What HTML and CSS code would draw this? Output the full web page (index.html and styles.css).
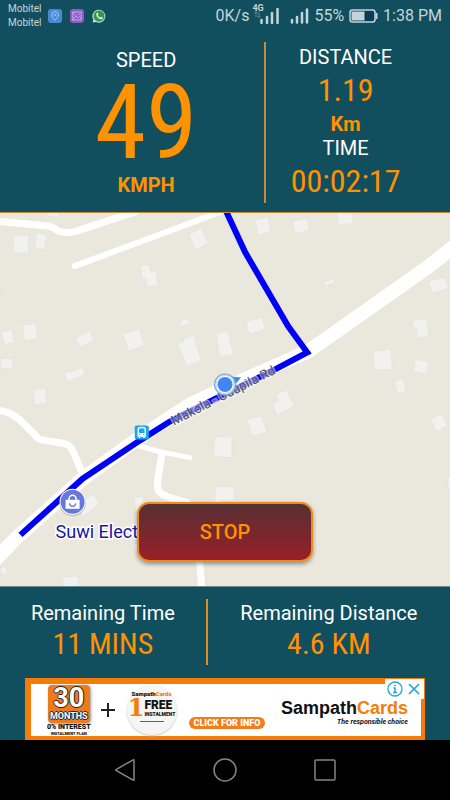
FILE: index.html
```html
<!DOCTYPE html>
<html lang="en">
<head>
  <meta charset="UTF-8" />
  <meta name="viewport" content="width=device-width, initial-scale=1" />
  <title>Trip Meter</title>
  <link rel="stylesheet" href="styles.css">
</head>
<body>

  <header class="status-bar">
    <div class="carriers">
      <span>Mobitel</span>
      <span>Mobitel</span>
    </div>
    <div class="status-apps">
      <svg width="14" height="14" viewBox="0 0 14 14" aria-hidden="true">
        <rect width="14" height="14" rx="3" fill="#4a8ad4"/>
        <path d="M7 11.5C5 9 3.7 7.500 3.700 5.800a3.300 3.300 0 0 1 6.600 0C10.300 7.500 9 9 7 11.500Z" fill="none" stroke="#a9cdf2" stroke-width=".9"/>
        <circle cx="7" cy="5.800" r="1" fill="none" stroke="#a9cdf2" stroke-width=".7"/>
      </svg>
      <svg width="14" height="14" viewBox="0 0 14 14" aria-hidden="true">
        <rect width="14" height="14" rx="3" fill="#8a5cc4"/>
        <rect x="2.800" y="3" width="8.400" height="8" fill="none" stroke="#cdb5ea" stroke-width=".9"/>
        <path d="M3 10.500 6 7l2 2 1.500-1.500 1.700 2M3.500 4l3 3" fill="none" stroke="#cdb5ea" stroke-width=".8"/>
        <circle cx="8.800" cy="5.300" r=".8" fill="#cdb5ea"/>
      </svg>
      <svg width="14" height="14" viewBox="0 0 14 14" aria-hidden="true">
        <path d="M.5 13.500 1.300 10.500A6.500 6.500 0 1 1 4 13Z" fill="#c5dcd8"/>
        <circle cx="7" cy="7" r="5.500" fill="#2b9a4a"/>
        <path d="M4.700 3.900c.6-.5 1-.3 1.200.2l.5 1.100c.1.400-.6.900-.5 1.200.5 1 1.200 1.600 2.200 2 .4.100.8-.8 1.200-.6l1.100.6c.5.300.3 1.100-.2 1.500-1 .8-2.700.3-4.200-1.100C4.400 7.300 3.700 5 4.700 3.900Z" fill="#e4f1ea"/>
      </svg>
    </div>
    <div class="status-right">
      <span>0K/s</span>
      <span class="signal">
        <small>4G</small>
        <svg width="25" height="16" viewBox="0 0 25 16" aria-hidden="true">
          <path d="M2 3.500v6M5 3.500v6M.5 5.500 2 3.500 3.500 5.500M3.500 8 5 9.500 6.500 8" fill="none" stroke="#5c8792" stroke-width="1"/>
          <path d="M7.500 12v3M13 9v6M18 5v10M23.500 1v14" stroke="#c3d5d9" stroke-width="2.500" stroke-linecap="round"/>
        </svg>
      </span>
      <svg width="19" height="16" viewBox="0 0 19 16" aria-hidden="true">
        <path d="M2 12v2.500M7 9v5.500M12 5v9.500M17 1.500v13" stroke="#c3d5d9" stroke-width="2.500" stroke-linecap="round"/>
      </svg>
      <span>55%</span>
      <svg class="battery" width="29" height="14" viewBox="0 0 29 14" aria-hidden="true">
        <rect x="1" y="1" width="25" height="12" rx="2.500" fill="#0b3c56" stroke="#c3d5d9" stroke-width="1.500"/>
        <rect x="2.500" y="2.500" width="13" height="9" fill="#c3d5d9"/>
        <path d="M27.500 4v6" stroke="#c3d5d9" stroke-width="2"/>
      </svg>
      <span>1:38 PM</span>
    </div>
  </header>

  <section class="trip-panel">
    <div class="speed">
      <div class="label">SPEED</div>
      <div class="digits digits-big">49</div>
      <div class="unit">KMPH</div>
    </div>
    <div class="trip">
      <div class="label">DISTANCE</div>
      <div class="digits">1.19</div>
      <div class="unit">Km</div>
      <div class="label">TIME</div>
      <div class="digits">00:02:17</div>
    </div>
  </section>

  <main class="map">
    <svg class="map-canvas" viewBox="0 0 450 372" preserveAspectRatio="xMidYMid slice" role="img" aria-label="Route map">
      <!-- buildings -->
      <g fill="#f1f1ef" stroke="#e3e2db" stroke-width=".7">
        <path d="M48 -3h12v6h-12z"/>
        <path d="M14 22h15v18h-15z"/>
        <path d="M37 20 47 22 45 37 35 35z"/>
        <path d="M189 22 201 15 209 30 196 37z"/>
        <path d="M141 52 149 51 151 59 156 58 158 72 147 73 146 65 142 65z"/>
        <path d="M0 76h1v10H0z"/>
        <path d="M2 119 12 116 15 129 5 131z"/>
        <path d="M23 112 36 110 38 126 25 127z"/>
        <path d="M76 125 90 117 94 127 80 134z"/>
        <path d="M123 121 139 115 145 132 129 138z"/>
        <path d="M1 145h12v10H1z"/>
        <path d="M65 160 83 154 86 161 68 168z"/>
        <path d="M34 176 46 174 47 190 35 191z"/>
        <path d="M180 107 189 105 190 111 181 113z"/>
        <path d="M178 131 184 128 183 126 194 122 201 147 187 153z"/>
        <path d="M216 120 228 118 233 141 220 143z"/>
        <path d="M255 7 268 4 271 19 258 22z"/>
        <path d="M292 9 307 5 309 17 295 21z"/>
        <path d="M336 -3 351 -3 353 10 338 12z"/>
        <path d="M417 -2h10v3h-10z"/>
        <path d="M323 69 334 65 335 69 325 73z"/>
        <path d="M428 68 444 64 448 75 432 80z"/>
        <path d="M246 108 262 104 265 116 249 121z"/>
        <path d="M412 107 426 105 428 124 417 125 416 115 413 114z"/>
        <path d="M373 138 390 136 392 156 374 157z"/>
        <path d="M415 146 428 148 426 161 413 158z"/>
        <path d="M394 168 402 165 406 178 397 180z"/>
        <path d="M276 181 286 176 294 192 277 202 272 191 278 187z"/>
        <path d="M247 206 261 202 267 218 252 223z"/>
        <path d="M430 206 441 200 447 212 436 218z"/>
        <path d="M447 264h6v10h-6z"/>
        <path d="M215 223 232 223 232 244 214 243z"/>
        <path d="M215 273h19v14h-12v4h-7z"/>
        <path d="M78 291 93 280 100 290 83 303z"/>
        <path d="M134 285 142 282 147 297 137 300z"/>
        <path d="M133 331 140 328 143 336 136 338z"/>
        <path d="M0 355 5 352 9 358 3 361z"/>
        <path d="M63 363 78 362 80 374 64 374z"/>
      </g>
      <!-- roads -->
      <g fill="none" stroke="#fff" stroke-linecap="round" stroke-linejoin="round">
        <path d="M-5 8 49 13C57 14 54 19 66 19.500 73 20 74 19 80 17L135 -1" stroke-width="7"/>
        <path d="M75 53 180 14 228 -4" stroke-width="6"/>
        <path d="M-5 196C8 198 14 200 22 208L35 221C40 228 45 226 58 229 68 230 71 232 74 239L85 265" stroke-width="7"/>
        <path d="M138 232 160 238 190 244" stroke-width="5"/>
        <path d="M162 241 158 266C156 278 160 280 168 283L188 289 196 310 199 340 202 376" stroke-width="7"/>
        <path d="M460 28 427 54 308 138 220 177 190 191 137 226 83 265 17 324 -8 350" stroke-width="14"/>
      </g>
      <!-- route -->
      <path d="M226 -2 245 39 288 113 307 139 275 156 222 182 170 208 140 227 83 265 21 321" fill="none" stroke="#0000f8" stroke-width="6"/>
      <text class="road-name" transform="translate(174 212) rotate(-27)">Makola - Udupila Rd</text>
      <!-- bus stop -->
      <g transform="translate(135 212)">
        <rect width="14" height="14" rx="2" fill="#10a8f0"/>
        <path d="M3.500 3.500Q3.500 2 7 2t3.500 1.500V10.500H3.500Z" fill="none" stroke="#fff" stroke-width="1.500"/>
        <path d="M3.500 7.500h7v3h-7zM4 11h1.500v1.500H4zM8.500 11H10v1.500H8.500z" fill="#fff"/>
        <circle cx="5" cy="9" r=".7" fill="#10a8f0"/>
        <circle cx="9" cy="9" r=".7" fill="#10a8f0"/>
      </g>
      <!-- shop -->
      <circle cx="73" cy="289" r="13.500" fill="#8d8d85" opacity=".4"/>
      <circle cx="73" cy="288" r="13" fill="#fff"/>
      <circle cx="73" cy="288" r="12" fill="#6677dd"/>
      <path d="M66 286h14v9H66z" fill="#fff"/>
      <path d="M69.500 287v-2a3.500 3.500 0 0 1 7 0v2" fill="none" stroke="#fff" stroke-width="1.500"/>
      <path d="M70 289.500a3 3 0 0 0 6 0" fill="none" stroke="#6677dd" stroke-width="1.300"/>
      <text class="place-name" x="56" y="324">Suwi Elect</text>
      <!-- current position -->
      <path d="M231 163 241 164 235 171z" fill="#3d8be8"/>
      <circle cx="225" cy="171" r="10.500" fill="#c4dcec" stroke="#79aad5" stroke-width="1"/>
      <circle cx="225" cy="171" r="8.500" fill="#fff"/>
      <circle cx="225" cy="171" r="7.500" fill="#4285f4"/>
    </svg>
    <button class="stop-button" type="button">STOP</button>
  </main>

  <section class="remaining-panel">
    <div class="remaining">
      <div class="label">Remaining Time</div>
      <div class="digits">11 MINS</div>
    </div>
    <div class="remaining">
      <div class="label">Remaining Distance</div>
      <div class="digits">4.6 KM</div>
    </div>
  </section>

  <aside class="ad-row">
    <a class="ad" href="#">
      <span class="offer">
        <span class="offer-box">
          <strong>30</strong>
          <b>MONTHS</b>
        </span>
        <span class="offer-note">0% INTEREST</span>
        <span class="offer-small">INSTALMENT PLAN</span>
      </span>
      <svg width="14" height="14" viewBox="0 0 14 14" aria-hidden="true">
        <path d="M7 0v14M0 7h14" stroke="#222" stroke-width="2"/>
      </svg>
      <span class="badge">
        <span class="badge-brand">Sampath<em>Cards</em></span>
        <span class="badge-main">
          <strong>1</strong>
          <span><b>FREE</b><i>INSTALMENT</i></span>
        </span>
        <span class="badge-line"></span>
      </span>
      <span class="click-info">CLICK FOR INFO</span>
      <span class="brand">
        <span class="brand-name">Sampath<em>Cards</em></span>
        <span class="brand-note">The responsible choice</span>
      </span>
    </a>
    <div class="ad-choices">
      <button type="button" aria-label="Ad info">
        <svg width="16" height="16" viewBox="0 0 16 16">
          <circle cx="8" cy="8" r="7" fill="none" stroke="#22a7d8" stroke-width="1.300"/>
          <path d="M6.500 7H8v4.500M6 11.500h4M7.200 4.500h1.600" fill="none" stroke="#22a7d8" stroke-width="1.500"/>
        </svg>
      </button>
      <button type="button" aria-label="Close ad">
        <svg width="16" height="16" viewBox="0 0 16 16">
          <path d="M3 3l10 10M13 3 3 13" stroke="#22a7d8" stroke-width="1.700"/>
        </svg>
      </button>
    </div>
  </aside>

  <nav class="nav-bar">
    <button type="button" aria-label="Back">
      <svg width="24" height="24" viewBox="0 0 24 24">
        <path d="M21 2.200v19.600a.5.500 0 0 1-.8.400L3 12.400a.5.500 0 0 1 0-.8L20.200 1.800a.5.500 0 0 1 .8.400Z" fill="none" stroke="#858585" stroke-width="1.500"/>
      </svg>
    </button>
    <button type="button" aria-label="Home">
      <svg width="24" height="24" viewBox="0 0 24 24">
        <circle cx="12" cy="12" r="11" fill="none" stroke="#858585" stroke-width="1.500"/>
      </svg>
    </button>
    <button type="button" aria-label="Recent apps">
      <svg width="24" height="24" viewBox="0 0 24 24">
        <rect x="2" y="2" width="20" height="20" rx="1" fill="none" stroke="#858585" stroke-width="1.500"/>
      </svg>
    </button>
  </nav>

</body>
</html>
```
FILE: styles.css
```css
* {
  box-sizing: border-box;
}

body {
  margin: 0;
  min-height: 100vh;
  display: flex;
  flex-direction: column;
  background: #114f5f;
  color: #fff;
  font-family: Roboto, sans-serif;
  font-size: 20px;
  line-height: 24px;
}

button {
  padding: 0;
  border: none;
  background: none;
  cursor: pointer;
}

svg {
  display: block;
}

/* Status bar */
.status-bar {
  display: flex;
  align-items: center;
  height: 32px;
  padding: 0 8px;
  color: #c3d5d9;
}

.carriers {
  display: flex;
  flex-direction: column;
  font-size: 10px;
  line-height: 14px;
}

.status-apps {
  display: flex;
  gap: 8px;
  margin-left: 6px;
}

.status-right {
  display: flex;
  align-items: center;
  gap: 5px;
  margin-left: auto;
  font-size: 16px;
  white-space: nowrap;
}

.signal {
  position: relative;
  margin-right: 6px;
}

.signal small {
  position: absolute;
  top: -5px;
  left: -2px;
  font-size: 9px;
  font-weight: 700;
  line-height: 10px;
}

/* Speed, distance and time */
.trip-panel {
  display: grid;
  grid-template-columns: 3fr 2fr;
  padding: 10px 25px 9px 28px;
  border-bottom: 1px solid #d08a35;
  text-align: center;
}

.speed {
  padding-top: 6px;
  border-right: 2px solid #c98a3c;
}

.trip {
  padding-top: 3px;
}

.digits {
  color: #ff9200;
  font-family: "Liberation Sans Narrow", "Roboto Condensed", Roboto, sans-serif;
  font-size: 32px;
  line-height: 43px;
  white-space: nowrap;
}

.digits-big {
  font-size: 104px;
  line-height: 101px;
}

.unit {
  color: #ff9200;
  font-weight: 700;
}

/* Map */
.map {
  position: relative;
  flex: 1;
  min-height: 300px;
  background: #eae8dd;
}

.map-canvas {
  position: absolute;
  inset: 0;
  width: 100%;
  height: 100%;
}

.road-name {
  font-size: 13px;
  fill: #555;
  stroke: rgba(255, 255, 255, 0.5);
  stroke-width: 3px;
  paint-order: stroke;
}

.place-name {
  font-size: 18px;
  fill: #17179c;
  stroke: #fff;
  stroke-width: 3px;
  paint-order: stroke;
}

.stop-button {
  position: absolute;
  bottom: 24px;
  left: 50%;
  width: 176px;
  height: 60px;
  transform: translateX(-50%);
  border: 2px solid #f08a18;
  border-radius: 12px;
  background: linear-gradient(#563033, #981f27);
  box-shadow: 0 2px 4px rgba(0, 0, 0, 0.4);
  color: #ff9200;
  font-family: inherit;
  font-size: 20px;
  font-weight: 500;
}

/* Remaining time and distance */
.remaining-panel {
  display: grid;
  grid-template-columns: 6fr 7fr;
  padding: 12px 0 13px;
  border-top: 1px solid #6f8b90;
  text-align: center;
}

.remaining {
  padding-top: 2px;
  border-right: 0 solid #e08c20;
}

.remaining .digits {
  padding-bottom: 2px;
  font-size: 30px;
  line-height: 38px;
}

.remaining .label {
  line-height: 24px;
}

.remaining:first-child {
  border-right-width: 2px;
}

/* Ad */
.ad-row {
  position: relative;
  margin: 0 25px;
}

.ad {
  display: flex;
  align-items: center;
  height: 62px;
  padding: 0 13px 0 16px;
  border: solid #f57c08;
  border-width: 6px 4px 4px 6px;
  background: #fff;
  color: #111;
  text-decoration: none;
  white-space: nowrap;
}

.ad em {
  color: #f57c08;
  font-style: normal;
}

.offer {
  display: flex;
  flex-direction: column;
  align-items: center;
  margin-right: 10px;
}

.offer-box {
  display: flex;
  flex-direction: column;
  align-items: center;
  width: 42px;
  height: 38px;
  border-radius: 4px;
  background: #ee7a1c;
  box-shadow: 1px 1px 3px rgba(0, 0, 0, 0.4);
  color: #fff;
  text-shadow: 1px 0 #222, -1px 0 #222, 0 1px #222, 0 -1px #222;
}

.offer-box strong {
  font-size: 27px;
  line-height: 26px;
}

.offer-box b {
  font-size: 9px;
  line-height: 10px;
}

.offer-note {
  font-size: 7px;
  font-weight: 900;
  line-height: 8px;
}

.offer-small {
  font-size: 4px;
  font-weight: 900;
  line-height: 5px;
}

.badge {
  display: flex;
  flex-direction: column;
  align-items: center;
  width: 50px;
  height: 50px;
  margin-left: 12px;
  padding-top: 5px;
  border-radius: 50%;
  background: #f5f5f4;
  box-shadow: 0 1px 2px #c8c8c6;
}

.badge-brand {
  font-size: 6px;
  font-weight: 900;
  line-height: 8px;
}

.badge-main {
  display: flex;
  align-items: center;
}

.badge-main strong {
  color: #f57c08;
  font-family: "DejaVu Serif", serif;
  font-size: 24px;
  line-height: 20px;
}

.badge-main span {
  display: flex;
  flex-direction: column;
}

.badge-main b {
  font-size: 12px;
  font-weight: 900;
  line-height: 12px;
}

.badge-main i {
  font-size: 5px;
  font-style: normal;
  font-weight: 900;
  line-height: 6px;
}

.badge-line {
  width: 24px;
  height: 1px;
  margin-top: 3px;
  background: #d8322a;
}

.click-info {
  align-self: flex-end;
  margin: 0 0 7px 12px;
  padding: 0 5px;
  border-radius: 6px;
  background: #f57c18;
  color: #fff;
  font-size: 9px;
  font-weight: 900;
  line-height: 12px;
}

.brand {
  display: flex;
  flex-direction: column;
  align-items: flex-end;
  margin-left: auto;
  padding-top: 4px;
}

.brand-name {
  font-family: "Liberation Sans", Arial, sans-serif;
  font-size: 18px;
  font-weight: 700;
  line-height: 20px;
}

.brand-note {
  font-size: 7px;
  font-style: italic;
  font-weight: 700;
  line-height: 8px;
}

.ad-choices {
  position: absolute;
  top: 1px;
  right: 1px;
  display: flex;
  gap: 3px;
  padding: 2px;
  background: #fff;
}

/* Navigation bar */
.nav-bar {
  display: flex;
  align-items: center;
  justify-content: center;
  gap: 76px;
  height: 60px;
  background: #000;
}
```
